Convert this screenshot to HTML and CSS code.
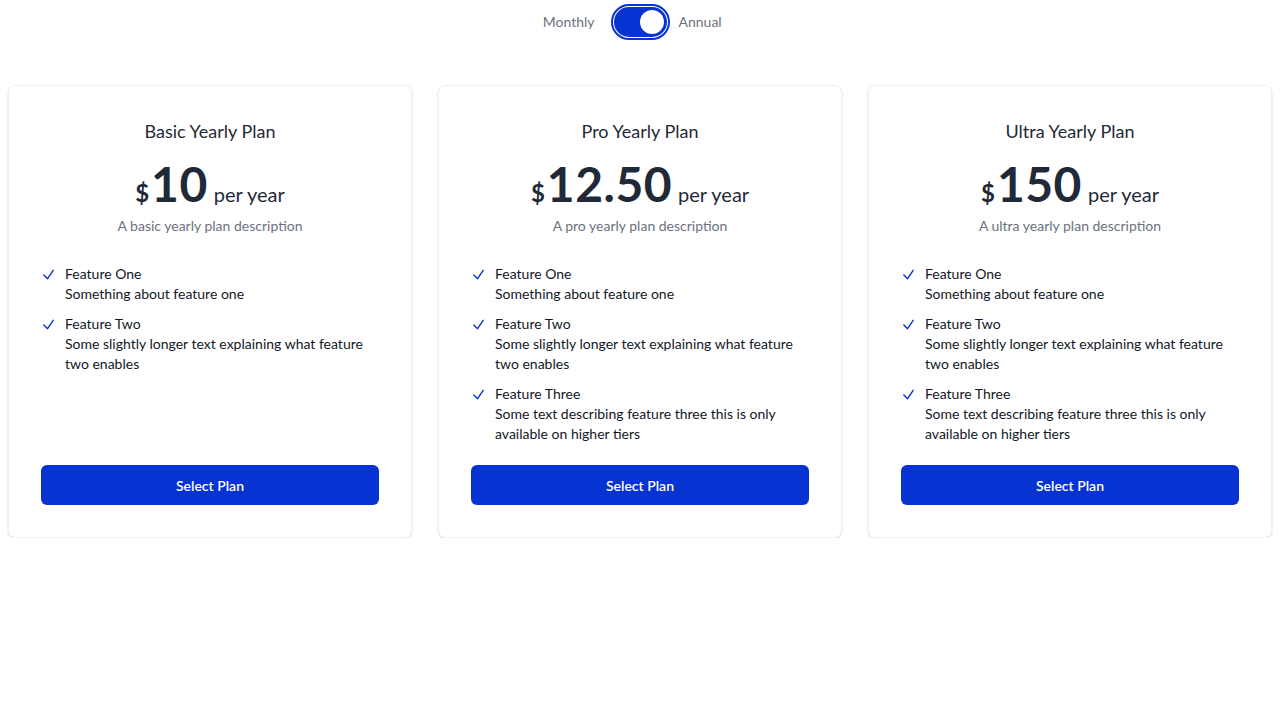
FILE: index.html
```html
<!DOCTYPE html>
<html>
<head>
<meta charset="utf-8">
<link rel="stylesheet" href="styles.css">
</head>
<body>
<div class="toggle-row">
  <span class="toggle-label monthly">Monthly</span>
  <span class="switch"><span class="knob"></span></span>
  <span class="toggle-label annual">Annual</span>
</div>
<div class="plans">
  <div class="card">
    <h2 class="title">Basic Yearly Plan</h2>
    <div class="price"><span class="cur">$</span><span class="amount">10</span><span class="per">per year</span></div>
    <p class="desc">A basic yearly plan description</p>
    <ul class="features">
      <li><svg class="check" viewBox="0 0 24 24"><path d="M4.5 12.75l6 6 9-13.5"/></svg><div><div>Feature One</div><div>Something about feature one</div></div></li>
      <li><svg class="check" viewBox="0 0 24 24"><path d="M4.5 12.75l6 6 9-13.5"/></svg><div><div>Feature Two</div><div>Some slightly longer text explaining what feature two enables</div></div></li>
    </ul>
    <button class="btn">Select Plan</button>
  </div>
  <div class="card">
    <h2 class="title">Pro Yearly Plan</h2>
    <div class="price"><span class="cur">$</span><span class="amount">12.50</span><span class="per">per year</span></div>
    <p class="desc">A pro yearly plan description</p>
    <ul class="features">
      <li><svg class="check" viewBox="0 0 24 24"><path d="M4.5 12.75l6 6 9-13.5"/></svg><div><div>Feature One</div><div>Something about feature one</div></div></li>
      <li><svg class="check" viewBox="0 0 24 24"><path d="M4.5 12.75l6 6 9-13.5"/></svg><div><div>Feature Two</div><div>Some slightly longer text explaining what feature two enables</div></div></li>
      <li><svg class="check" viewBox="0 0 24 24"><path d="M4.5 12.75l6 6 9-13.5"/></svg><div><div>Feature Three</div><div>Some text describing feature three this is only available on higher tiers</div></div></li>
    </ul>
    <button class="btn">Select Plan</button>
  </div>
  <div class="card">
    <h2 class="title">Ultra Yearly Plan</h2>
    <div class="price"><span class="cur">$</span><span class="amount">150</span><span class="per">per year</span></div>
    <p class="desc">A ultra yearly plan description</p>
    <ul class="features">
      <li><svg class="check" viewBox="0 0 24 24"><path d="M4.5 12.75l6 6 9-13.5"/></svg><div><div>Feature One</div><div>Something about feature one</div></div></li>
      <li><svg class="check" viewBox="0 0 24 24"><path d="M4.5 12.75l6 6 9-13.5"/></svg><div><div>Feature Two</div><div>Some slightly longer text explaining what feature two enables</div></div></li>
      <li><svg class="check" viewBox="0 0 24 24"><path d="M4.5 12.75l6 6 9-13.5"/></svg><div><div>Feature Three</div><div>Some text describing feature three this is only available on higher tiers</div></div></li>
    </ul>
    <button class="btn">Select Plan</button>
  </div>
</div>
</body>
</html>
```

FILE: styles.css
```css
* { box-sizing: border-box; }
body {
  margin: 0;
  padding: 0 8px;
  font-family: Lato, "Noto Sans", sans-serif;
  color: #1f2937;
  background: #fff;
}
.toggle-row {
  display: grid;
  grid-template-columns: 1fr auto 1fr;
  align-items: center;
  height: 43px;
  padding-top: 0;
}
.toggle-label {
  font-size: 14px;
  line-height: 20px;
  color: #6b7280;
}
.monthly {
  justify-self: end;
  margin-right: 16px;
}
.annual {
  justify-self: start;
  margin-left: 9px;
}
.switch {
  width: 59px;
  height: 36px;
  border-radius: 18px;
  border: 2px solid #0733d3;
  padding: 1px;
  display: flex;
  background: #fff;
}
.switch .knob {
  flex: 1;
  border-radius: 15px;
  background: #0733d3;
  display: flex;
  justify-content: flex-end;
  align-items: center;
  padding: 3px;
}
.switch .knob::after {
  content: "";
  width: 24px;
  height: 24px;
  border-radius: 50%;
  background: #fff;
}
.plans {
  display: grid;
  grid-template-columns: repeat(3, 1fr);
  gap: 26px;
  margin-top: 42px;
}
.card {
  border: 1px solid #eef0f2;
  border-radius: 8px;
  box-shadow: 0 1px 3px rgba(0,0,0,0.1), 0 1px 2px rgba(0,0,0,0.05);
  padding: 31px 32px 32px;
  display: flex;
  flex-direction: column;
  text-align: center;
}
.title {
  margin: 0;
  font-size: 18px;
  line-height: 28px;
  font-weight: 400;
  color: #1f2937;
}
.price {
  margin-top: 15px;
  height: 48px;
  display: flex;
  justify-content: center;
  align-items: baseline;
  color: #1f2937;
  line-height: 1;
}
.cur {
  font-size: 24px;
  font-weight: 700;
  margin-right: 2px;
  line-height: 1;
}
.amount {
  font-size: 48px;
  font-weight: 700;
  letter-spacing: 0.5px;
  line-height: 48px;
}
.per {
  font-size: 20px;
  margin-left: 6px;
  line-height: 1;
}
.desc {
  margin: 8px 0 0;
  font-size: 14px;
  line-height: 20px;
  color: #6b7280;
}
.features {
  list-style: none;
  margin: 28px 0 0;
  padding: 0;
  flex: 1;
  text-align: left;
  font-size: 14px;
  line-height: 20px;
  color: #111827;
}
.features li {
  display: flex;
  gap: 9px;
  margin-bottom: 10px;
}
.check {
  width: 15px;
  height: 15px;
  flex: none;
  margin-top: 3px;
  margin-left: 0;
  fill: none;
  stroke: #0733d3;
  stroke-width: 2.2;
  stroke-linecap: round;
  stroke-linejoin: round;
}
.btn {
  margin-top: 11px;
  height: 40px;
  border: 0;
  border-radius: 6px;
  background: #0733d3;
  color: #fff;
  font-family: inherit;
  font-size: 14px;
  font-weight: 600;
  cursor: pointer;
}
```
